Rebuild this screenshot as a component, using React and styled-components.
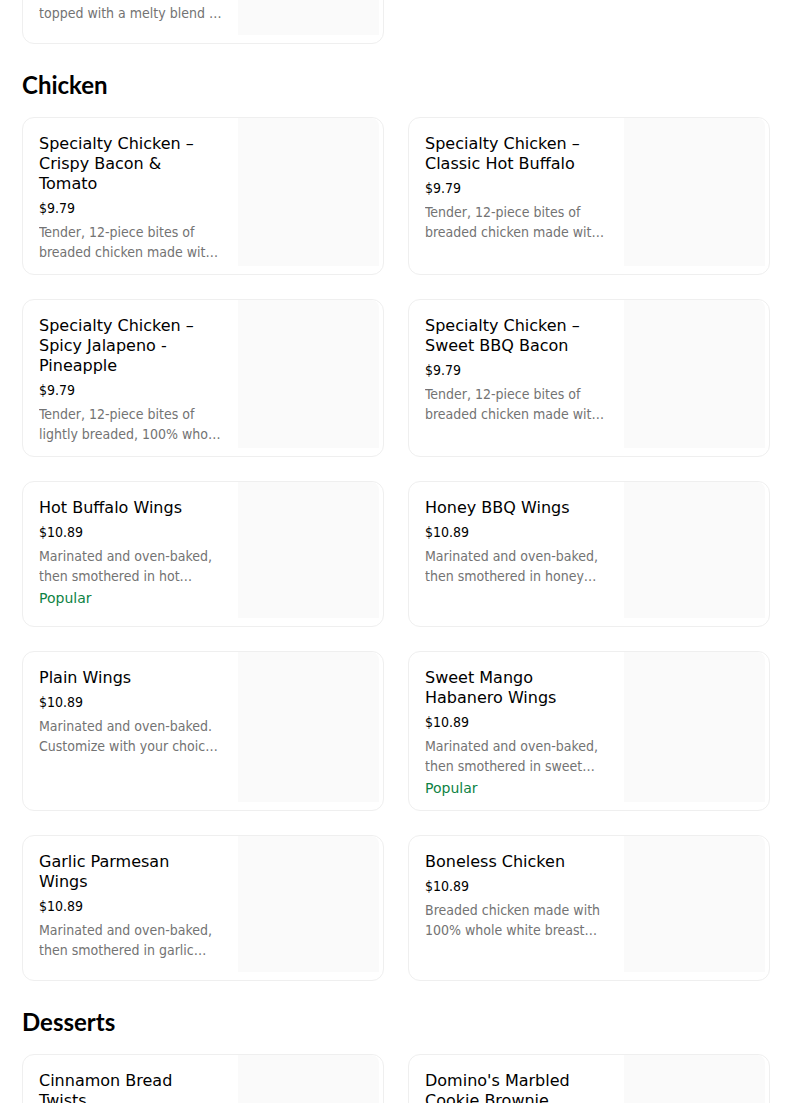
import styled, { createGlobalStyle } from "styled-components";

const GlobalStyle = createGlobalStyle`
    html, body {
        margin: 0;
        padding: 0;
        background: #ffffff;
    }
    body {
        font-family: "DejaVu Sans", sans-serif;
        color: #000000;
        overflow: hidden;
    }
`;

// the page is shown scrolled a little past the previous section
const Page = styled.main`
    box-sizing: border-box;
    margin-top: -102px;
    padding: 0 34px 0 22px;
    width: 804px;
`;

const Section = styled.section`
    & + & {
        margin-top: 25px;
    }
`;

const SectionTitle = styled.h2`
    font-family: "Lato", "DejaVu Sans", sans-serif;
    font-size: 24px;
    font-weight: 700;
    line-height: 32px;
    margin: 0 0 16px;
`;

const Grid = styled.div`
    display: grid;
    gap: 24px;
    grid-template-columns: repeat(2, 362px);
`;

const Card = styled.article`
    background: #ffffff;
    border: 1px solid #efefef;
    border-radius: 12px;
    box-sizing: border-box;
    display: grid;
    grid-template-columns: 1fr 145px;
    min-height: 146px;
    overflow: hidden;
`;

const Info = styled.div`
    min-width: 0;
    padding: 16px 16px 12px;
`;

const ItemName = styled.h3`
    font-size: 16px;
    font-weight: 400;
    line-height: 20px;
    margin: 0;
`;

const Price = styled.div`
    font-family: "DejaVu Sans Condensed", "DejaVu Sans", sans-serif;
    font-size: 14px;
    line-height: 20px;
    margin-top: 4px;
`;

const Description = styled.p`
    -webkit-box-orient: vertical;
    -webkit-line-clamp: 2;
    color: #737373;
    display: -webkit-box;
    font-family: "DejaVu Sans Condensed", "DejaVu Sans", sans-serif;
    font-size: 14px;
    line-height: 20px;
    margin: 4px 0 0;
    max-height: 40px;
    overflow: hidden;
`;

const Badge = styled.div`
    color: #0e8345;
    font-size: 14px;
    line-height: 20px;
    margin-top: 2px;
`;

const Thumb = styled.div`
    background: #fafafa;
    border-radius: 0 8px 0 0;
    margin: 0 4px 8px 0;
`;

const sections = [
    {
        title: null,
        items: [
            {
                name: "Chicken Parm Sandwich",
                price: "$8.99",
                desc: "Grilled chicken breast, topped with a melty blend of cheeses",
            },
        ],
    },
    {
        title: "Chicken",
        items: [
            { name: "Specialty Chicken – Crispy Bacon & Tomato", price: "$9.79", desc: "Tender, 12-piece bites of breaded chicken made with 100% whole white breast meat" },
            { name: "Specialty Chicken – Classic Hot Buffalo", price: "$9.79", desc: "Tender, 12-piece bites of breaded chicken made with 100% whole white breast meat" },
            { name: "Specialty Chicken – Spicy Jalapeno - Pineapple", price: "$9.79", desc: "Tender, 12-piece bites of lightly breaded, 100% whole white breast meat" },
            { name: "Specialty Chicken – Sweet BBQ Bacon", price: "$9.79", desc: "Tender, 12-piece bites of breaded chicken made with 100% whole white breast meat" },
            { name: "Hot Buffalo Wings", price: "$10.89", desc: "Marinated and oven-baked, then smothered in hot buffalo sauce", popular: true },
            { name: "Honey BBQ Wings", price: "$10.89", desc: "Marinated and oven-baked, then smothered in honey BBQ sauce" },
            { name: "Plain Wings", price: "$10.89", desc: "Marinated and oven-baked. Customize with your choice of dipping sauce" },
            { name: "Sweet Mango Habanero Wings", price: "$10.89", desc: "Marinated and oven-baked, then smothered in sweet mango habanero sauce", popular: true },
            { name: "Garlic Parmesan Wings", price: "$10.89", desc: "Marinated and oven-baked, then smothered in garlic parmesan sauce" },
            { name: "Boneless Chicken", price: "$10.89", desc: "Breaded chicken made with 100% whole white breast meat" },
        ],
    },
    {
        title: "Desserts",
        items: [
            { name: "Cinnamon Bread Twists", price: "$6.49", desc: "Handmade from fresh buttery-tasting dough and baked to a golden brown" },
            { name: "Domino's Marbled Cookie Brownie", price: "$7.49", desc: "Layers of chocolate chip cookie and brownie, baked to perfection" },
        ],
    },
];

function MenuCard({ item }) {
    return (
        <Card>
            <Info>
                <ItemName>{ item.name }</ItemName>
                <Price>{ item.price }</Price>
                <Description>{ item.desc }</Description>
                { item.popular && <Badge>Popular</Badge> }
            </Info>
            <Thumb />
        </Card>
    );
}

export default function App() {
    return (
        <>
            <GlobalStyle />
            <Page>
                { sections.map((section, i) => (
                    <Section key={ i }>
                        { section.title && <SectionTitle>{ section.title }</SectionTitle> }
                        <Grid>
                            { section.items.map((item) => (
                                <MenuCard key={ item.name } item={ item } />
                            )) }
                        </Grid>
                    </Section>
                )) }
            </Page>
        </>
    );
}
